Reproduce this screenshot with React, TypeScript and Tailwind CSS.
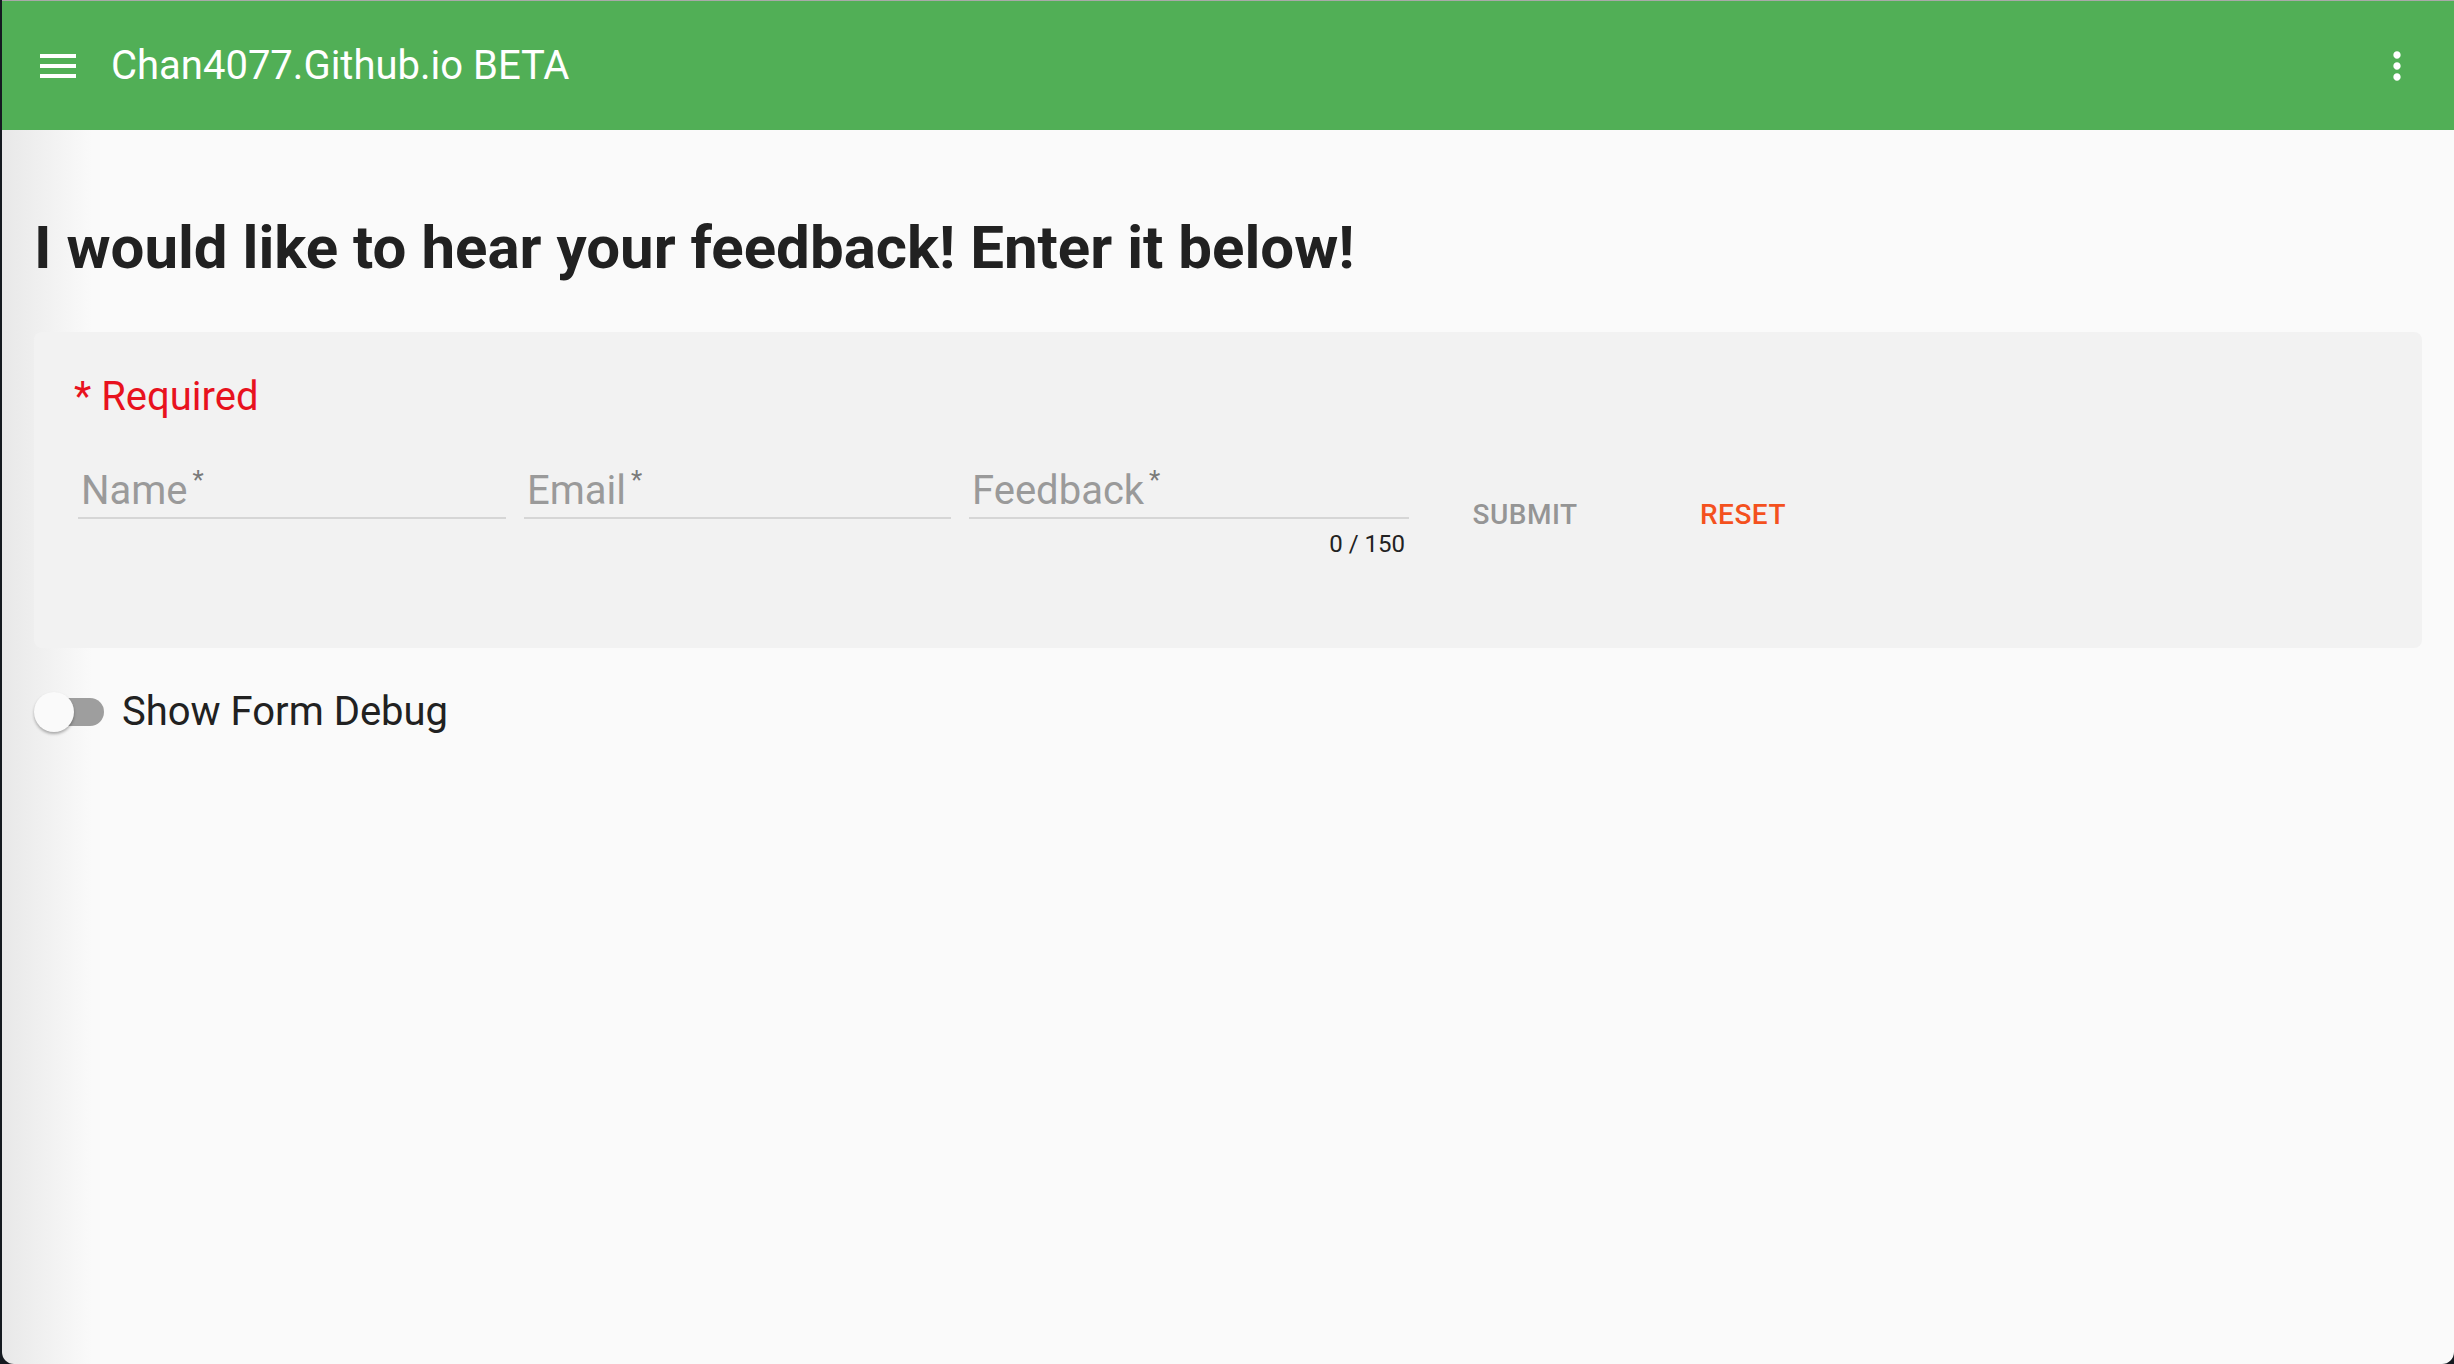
import React from 'react';

const font = { fontFamily: 'Roboto, "Noto Sans", sans-serif' };

const Field: React.FC<{ label: string; width: string; counter?: string }> = ({ label, width, counter }) => (
  <div className={`flex flex-col ${width}`}>
    <div className="pl-[3px] pb-[3px] border-b-2 border-[#d6d6d6] text-[40px] leading-[47px] text-[#9a9a9a]">
      {label}
      <span className="align-top ml-[5px] text-[26px] leading-[26px] text-[#7a7a7a]">*</span>
    </div>
    {counter && (
      <div className="mt-[11px] pr-[4px] text-right text-[24px] leading-[28px] text-[#222]">{counter}</div>
    )}
  </div>
);

export default function App() {
  return (
    <div className="h-screen w-full bg-[#151a20] flex" style={font}>
      <div className="flex-1 ml-[2px] flex flex-col rounded-b-[12px] overflow-hidden border-t border-[#a9a9a9] bg-[linear-gradient(to_right,#e8e8e8_0px,#fafafa_90px)]">
        <header className="h-[129px] shrink-0 bg-[#51af56] flex items-center pl-[32px] pr-[35px]">
          <svg width="48" height="48" viewBox="0 0 24 24" fill="white">
            <path d="M3 18h18v-2H3v2zm0-5h18v-2H3v2zm0-7v2h18V6H3z" />
          </svg>
          <span className="ml-[29px] text-[40px] text-white leading-none">Chan4077.Github.io BETA</span>
          <svg className="ml-auto" width="44" height="44" viewBox="0 0 24 24" fill="white">
            <path d="M12 8c1.1 0 2-.9 2-2s-.9-2-2-2-2 .9-2 2 .9 2 2 2zm0 2c-1.1 0-2 .9-2 2s.9 2 2 2 2-.9 2-2-.9-2-2-2zm0 6c-1.1 0-2 .9-2 2s.9 2 2 2 2-.9 2-2-.9-2-2-2z" />
          </svg>
        </header>

        <main className="px-[32px]">
          <h1 className="mt-[83px] text-[60px] leading-[70px] font-bold text-[#212121]">
            I would like to hear your feedback! Enter it below!
          </h1>

          <div className="mt-[49px] rounded-[8px] bg-[#f2f2f2] pt-[41px] pb-[90px] px-[40px]">
            <div className="text-[40px] leading-[47px] text-[#e8121e]">* Required</div>
            <div className="mt-[47px] flex items-start pl-[4px]">
              <Field label="Name" width="w-[428px]" />
              <div className="ml-[18px]">
                <Field label="Email" width="w-[427px]" />
              </div>
              <div className="ml-[18px]">
                <Field label="Feedback" width="w-[440px]" counter="0 / 150" />
              </div>
              <button className="ml-[28px] mt-[12px] w-[176px] h-[72px] text-[28px] font-medium uppercase tracking-[0.5px] text-[#959595]">
                Submit
              </button>
              <button className="ml-[42px] mt-[12px] w-[176px] h-[72px] text-[28px] font-medium uppercase tracking-[0.5px] text-[#f4511e]">
                Reset
              </button>
            </div>
          </div>

          <div className="mt-[44px] flex items-center">
            <div className="relative w-[70px] h-[40px]">
              <div className="absolute left-[2px] top-[6px] w-[68px] h-[28px] rounded-full bg-[#9e9e9e]" />
              <div className="absolute left-0 top-0 w-[40px] h-[40px] rounded-full bg-[#fafafa] shadow-[0_2px_3px_rgba(0,0,0,0.3)]" />
            </div>
            <span className="ml-[18px] text-[40px] leading-[40px] text-[#212121]">Show Form Debug</span>
          </div>
        </main>
      </div>
    </div>
  );
}
